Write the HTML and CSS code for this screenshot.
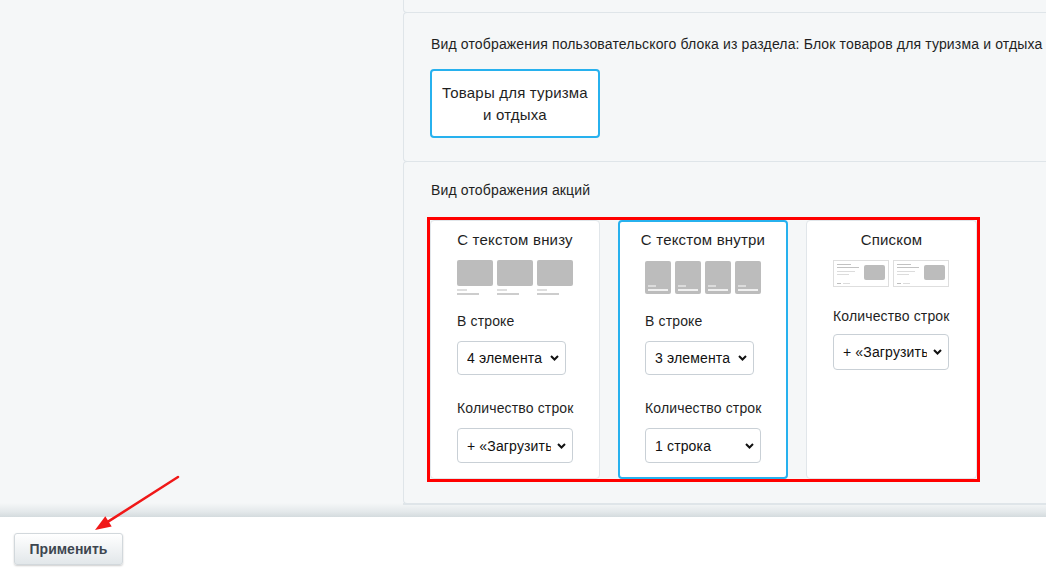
FILE: index.html
```html
<!DOCTYPE html>
<html lang="ru">
<head>
    <meta charset="UTF-8">
    <title>Настройки блока</title>
    <link rel="stylesheet" href="styles.css">
</head>
<body>
    <div class="page">
        <aside class="sidebar"></aside>
        <div class="content">
            <section class="panel panel-stub"></section>

            <section class="panel panel-section">
                <div class="panel-label">Вид отображения пользовательского блока из раздела: Блок товаров для туризма и отдыха</div>
                <div class="choice">Товары для туризма<br>и отдыха</div>
            </section>

            <section class="panel panel-views">
                <div class="panel-label">Вид отображения акций</div>
                <div class="views">
                    <div class="view">
                        <div class="view-title">С текстом внизу</div>
                        <div class="thumbs">
                            <div class="tb"><i class="tb-img"></i><i class="tb-l1"></i><i class="tb-l2"></i></div>
                            <div class="tb"><i class="tb-img"></i><i class="tb-l1"></i><i class="tb-l2"></i></div>
                            <div class="tb"><i class="tb-img"></i><i class="tb-l1"></i><i class="tb-l2"></i></div>
                        </div>
                        <div class="field-label">В строке</div>
                        <div class="select select-sm">
                            <span class="select-text">4 элемента</span>
                            <svg class="chevron" width="9" height="6" viewBox="0 0 9 6"><path d="M1 1l3.5 3.5L8 1" fill="none" stroke="#111" stroke-width="2"/></svg>
                        </div>
                        <div class="field-label field-gap">Количество строк</div>
                        <div class="select">
                            <span class="select-text">+ «Загрузить ещё»</span>
                            <svg class="chevron" width="9" height="6" viewBox="0 0 9 6"><path d="M1 1l3.5 3.5L8 1" fill="none" stroke="#111" stroke-width="2"/></svg>
                        </div>
                    </div>

                    <div class="view view-active">
                        <div class="view-title">С текстом внутри</div>
                        <div class="thumbs">
                            <div class="ti"><i class="ti-l1"></i><i class="ti-l2"></i></div>
                            <div class="ti"><i class="ti-l1"></i><i class="ti-l2"></i></div>
                            <div class="ti"><i class="ti-l1"></i><i class="ti-l2"></i></div>
                            <div class="ti"><i class="ti-l1"></i><i class="ti-l2"></i></div>
                        </div>
                        <div class="field-label">В строке</div>
                        <div class="select select-sm">
                            <span class="select-text">3 элемента</span>
                            <svg class="chevron" width="9" height="6" viewBox="0 0 9 6"><path d="M1 1l3.5 3.5L8 1" fill="none" stroke="#111" stroke-width="2"/></svg>
                        </div>
                        <div class="field-label field-gap">Количество строк</div>
                        <div class="select">
                            <span class="select-text">1 строка</span>
                            <svg class="chevron" width="9" height="6" viewBox="0 0 9 6"><path d="M1 1l3.5 3.5L8 1" fill="none" stroke="#111" stroke-width="2"/></svg>
                        </div>
                    </div>

                    <div class="view view-list">
                        <div class="view-title">Списком</div>
                        <div class="thumbs thumbs-list">
                            <div class="tl">
                                <div class="tl-text">
                                    <i class="tl-a"></i><i class="tl-b"></i><i class="tl-c"></i><i class="tl-d"></i>
                                    <span class="tl-foot"><i class="tl-e"></i><i class="tl-f"></i></span>
                                </div>
                                <i class="tl-img"></i>
                            </div>
                            <div class="tl">
                                <div class="tl-text">
                                    <i class="tl-a"></i><i class="tl-b"></i><i class="tl-c"></i><i class="tl-d"></i>
                                    <span class="tl-foot"><i class="tl-e"></i><i class="tl-f"></i></span>
                                </div>
                                <i class="tl-img"></i>
                            </div>
                        </div>
                        <div class="field-label">Количество строк</div>
                        <div class="select">
                            <span class="select-text">+ «Загрузить ещё»</span>
                            <svg class="chevron" width="9" height="6" viewBox="0 0 9 6"><path d="M1 1l3.5 3.5L8 1" fill="none" stroke="#111" stroke-width="2"/></svg>
                        </div>
                    </div>
                </div>
            </section>

            <section class="panel"></section>
        </div>
    </div>

    <footer class="footer">
        <button class="apply">Применить</button>
    </footer>

    <!-- pointer to the apply button -->
    <svg class="pointer" width="120" height="80" viewBox="80 470 120 80">
        <line x1="178" y1="477" x2="108.5" y2="521.4" stroke="#f01818" stroke-width="2.5" stroke-linecap="round"/>
        <polygon points="95,530 111.7,526.5 105.3,516.3" fill="#f01818"/>
    </svg>
</body>
</html>
```

FILE: styles.css
```css
body {
    margin: 0;
    font-family: "Liberation Sans", Arial, sans-serif;
    font-size: 14px;
    letter-spacing: 0.15px;
    color: #1f1f1f;
    background: #fff;
    position: relative;
}
.page {
    height: 517px;
    display: flex;
    overflow: hidden;
    background: linear-gradient(to bottom, #f5f7f8 0, #f5f7f8 calc(100% - 14px), #e3e8ea calc(100% - 5px), #d4dbde 100%);
}
.sidebar {
    width: 403px;
    flex-shrink: 0;
}
.content {
    flex: 1;
}
.panel {
    border: 1px solid #dfe5e9;
    border-right: none;
    border-radius: 4px 0 0 4px;
    margin-top: -1px;
    padding: 0 0 0 26px;
}
.panel-stub {
    height: 12px;
    margin-top: 0;
    border-top: none;
    border-radius: 0 0 0 4px;
}
.panel-section {
    padding-top: 23px;
    padding-bottom: 23px;
}
.panel-views {
    padding-top: 20px;
    padding-bottom: 24px;
}
.panel-label {
    line-height: 16px;
    padding-left: 1px;
    white-space: nowrap;
}
.choice {
    box-sizing: border-box;
    width: 170px;
    height: 69px;
    margin-top: 17px;
    background: #fff;
    border: 2px solid #27b1ee;
    border-radius: 4px;
    display: flex;
    align-items: center;
    justify-content: center;
    text-align: center;
    font-size: 15px;
    letter-spacing: 0.2px;
    line-height: 22px;
}

/* view variants */
.views {
    margin-top: 22px;
    display: flex;
    gap: 18px;
    width: 547px;
    height: 259px;
    outline: 3px solid #ff0000;
}
.view {
    box-sizing: border-box;
    width: 170px;
    background: #fff;
    border: 1px solid #e1e6ea;
    border-radius: 4px;
    padding: 11px 0 0 26px;
}
.view-active {
    border: 2px solid #27b1ee;
    padding: 10px 0 0 25px;
}
.view-list {
    width: 171px;
}
.view-title {
    font-size: 15px;
    letter-spacing: 0.2px;
    line-height: 16px;
    text-align: center;
    margin-left: -26px;
}
.view-active .view-title {
    margin-left: -25px;
}
.thumbs {
    display: flex;
    gap: 4px;
    height: 35px;
    margin-top: 12px;
}
.thumbs i {
    display: block;
}
.tb-img {
    width: 36px;
    height: 26px;
    border-radius: 2px;
    background: #bcbcbc;
}
.tb-l1 {
    width: 10px;
    height: 2px;
    margin-top: 3px;
    background: #dedede;
}
.tb-l2 {
    width: 22px;
    height: 2px;
    margin-top: 2px;
    background: #cdcdcd;
}
.ti {
    box-sizing: border-box;
    width: 26px;
    height: 33px;
    margin-top: 1px;
    border-radius: 2px;
    background: #bcbcbc;
    display: flex;
    flex-direction: column;
    justify-content: flex-end;
    padding: 0 3px 3px;
}
.ti-l1 {
    width: 8px;
    height: 2px;
    background: #dcdcdc;
}
.ti-l2 {
    width: 20px;
    height: 2px;
    margin-top: 2px;
    background: #f0f0f0;
}
.thumbs-list {
    height: 27px;
}
.tl {
    box-sizing: border-box;
    width: 56px;
    height: 27px;
    border: 1px solid #dedede;
    display: flex;
    justify-content: space-between;
    padding: 3px 3px 0 3px;
}
.tl-text {
    display: flex;
    flex-direction: column;
}
.tl-a {
    width: 14px;
    height: 1px;
    background: #c2c2c2;
}
.tl-b {
    width: 22px;
    height: 1px;
    margin-top: 2px;
    background: #c2c2c2;
}
.tl-c {
    width: 18px;
    height: 1px;
    margin-top: 3px;
    background: #dcdcdc;
}
.tl-d {
    width: 12px;
    height: 1px;
    margin-top: 2px;
    background: #dcdcdc;
}
.tl-foot {
    display: flex;
    gap: 2px;
    margin-top: 8px;
}
.tl-e {
    width: 4px;
    height: 1px;
    background: #bdbdbd;
}
.tl-f {
    width: 7px;
    height: 1px;
    background: #dcdcdc;
}
.tl-img {
    width: 21px;
    height: 15px;
    margin-top: 1px;
    border-radius: 2px;
    background: #bcbcbc;
}
.field-label {
    line-height: 16px;
    margin-top: 18px;
    white-space: nowrap;
}
.field-gap {
    margin-top: 25px;
}
.view-list .field-label {
    margin-top: 21px;
}
.view-list .select {
    margin-top: 10px;
    height: 36px;
}

/* select imitation */
.select {
    box-sizing: border-box;
    width: 116px;
    height: 35px;
    margin-top: 12px;
    border: 1px solid #c9d0d6;
    border-radius: 4px;
    background: #fff;
    display: flex;
    align-items: center;
    padding: 0 6px 0 9px;
}
.select-sm {
    width: 109px;
    height: 34px;
}
.select-text {
    flex: 1;
    overflow: hidden;
    white-space: nowrap;
    color: #111;
}
.chevron {
    flex-shrink: 0;
    margin-left: 6px;
}

/* footer */
.footer {
    height: 61px;
    padding: 16px 0 0 14px;
    box-sizing: border-box;
    background: #fff;
}
.apply {
    width: 109px;
    height: 32px;
    font-family: "Liberation Sans", Arial, sans-serif;
    font-size: 14px;
    font-weight: bold;
    color: #3d4650;
    background: linear-gradient(to bottom, #ffffff, #e2e7ea);
    border: 1px solid #d2d8dc;
    border-radius: 3px;
    box-shadow: 0 1px 2px rgba(0, 0, 0, 0.2);
    padding: 0;
    cursor: pointer;
}
.pointer {
    position: absolute;
    left: 80px;
    top: 470px;
}
```
